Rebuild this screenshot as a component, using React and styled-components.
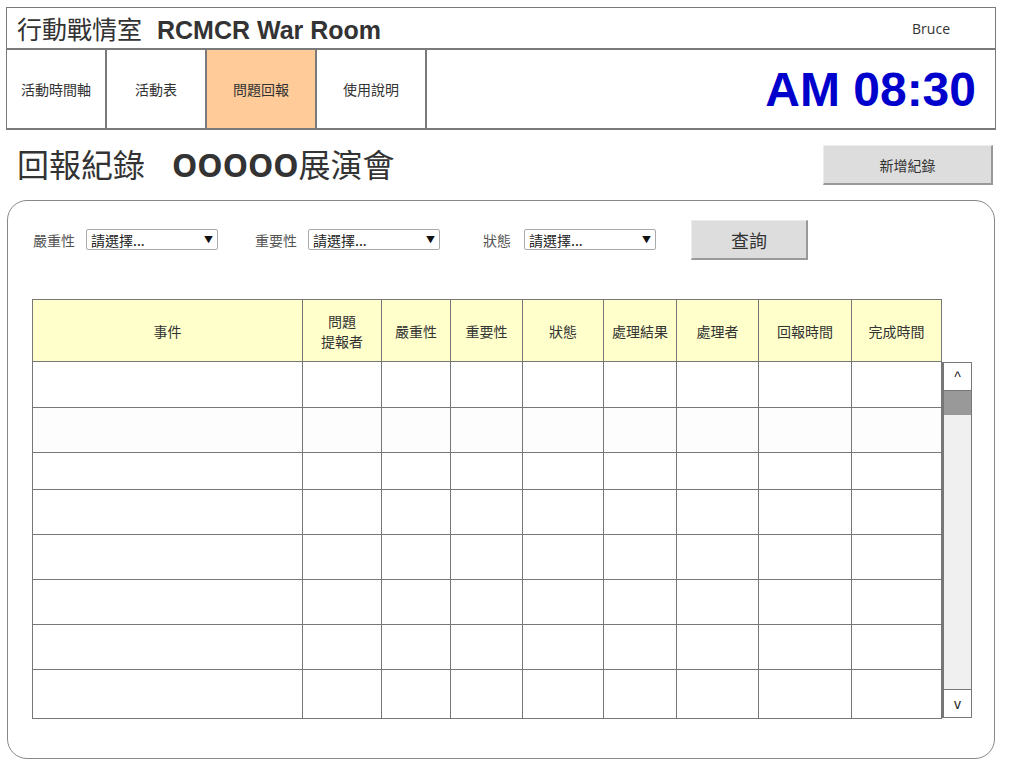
import React from 'react';
import styled, { createGlobalStyle } from 'styled-components';

const cjk = '"Noto Sans CJK TC", "Noto Sans", sans-serif';
const latin = '"Liberation Sans", "Noto Sans CJK TC", Arial, sans-serif';

const GlobalStyle = createGlobalStyle`
  body {
    margin: 0;
    background: #fff;
    font-family: ${cjk};
    color: #333;
  }
`;

const navItems = [
  { label: '活動時間軸', width: 100 },
  { label: '活動表', width: 100 },
  { label: '問題回報', width: 110, active: true },
  { label: '使用說明', width: 110 },
];

const columns = [
  { label: '事件', width: 270 },
  { label: '問題\n提報者', width: 79 },
  { label: '嚴重性', width: 69 },
  { label: '重要性', width: 72 },
  { label: '狀態', width: 81 },
  { label: '處理結果', width: 73 },
  { label: '處理者', width: 82 },
  { label: '回報時間', width: 93 },
  { label: '完成時間', width: 90 },
];

const rowHeights = [46, 45, 37, 45, 45, 45, 45, 49];

const filters = [
  { label: '嚴重性', labelGap: 11, gap: 37 },
  { label: '重要性', labelGap: 11, gap: 43 },
  { label: '狀態', labelGap: 13, gap: 0 },
];

export default function App() {
  return (
    <PageStyled>
      <GlobalStyle />
      <HeaderStyled>
        <TitleBarStyled>
          <SiteTitleStyled>
            行動戰情室<strong>RCMCR War Room</strong>
          </SiteTitleStyled>
          <UserStyled>Bruce</UserStyled>
        </TitleBarStyled>
        <NavRowStyled>
          {navItems.map((item) => (
            <NavTabStyled key={item.label} $width={item.width} $active={item.active}>
              {item.label}
            </NavTabStyled>
          ))}
          <ClockStyled>AM 08:30</ClockStyled>
        </NavRowStyled>
      </HeaderStyled>

      <PageHeadStyled>
        <PageTitleStyled>
          回報紀錄<strong>OOOOO</strong>展演會
        </PageTitleStyled>
        <AddButtonStyled>新增紀錄</AddButtonStyled>
      </PageHeadStyled>

      <PanelStyled>
        <FilterRowStyled>
          {filters.map((f) => (
            <FilterStyled key={f.label} $gap={f.gap}>
              <FilterLabelStyled $gap={f.labelGap}>{f.label}</FilterLabelStyled>
              <FakeSelectStyled>
                請選擇...
                <ArrowStyled>▼</ArrowStyled>
              </FakeSelectStyled>
            </FilterStyled>
          ))}
          <SearchButtonStyled>查詢</SearchButtonStyled>
        </FilterRowStyled>

        <TableAreaStyled>
          <TableStyled>
            <colgroup>
              {columns.map((c) => (
                <col key={c.label} style={{ width: c.width }} />
              ))}
            </colgroup>
            <thead>
              <tr>
                {columns.map((c) => (
                  <HeadCellStyled key={c.label}>{c.label}</HeadCellStyled>
                ))}
              </tr>
            </thead>
            <tbody>
              {rowHeights.map((h, i) => (
                <BodyRowStyled key={i} $height={h} $shaded={i === 1}>
                  {columns.map((c) => (
                    <td key={c.label} />
                  ))}
                </BodyRowStyled>
              ))}
            </tbody>
          </TableStyled>
          <ScrollbarStyled>
            <ScrollButtonStyled>^</ScrollButtonStyled>
            <ScrollThumbStyled />
            <ScrollTrackStyled />
            <ScrollButtonStyled $down>v</ScrollButtonStyled>
          </ScrollbarStyled>
        </TableAreaStyled>
      </PanelStyled>
    </PageStyled>
  );
}

const PageStyled = styled.div`
  width: 990px;
  padding: 7px 0 0 6px;
`;

const HeaderStyled = styled.header`
  border: 2px solid #7a7a7a;
  border-top-width: 1px;
  border-left-width: 1px;
  border-right-width: 1px;
`;

const TitleBarStyled = styled.div`
  display: flex;
  align-items: center;
  justify-content: space-between;
  height: 40px;
  padding: 0 45px 0 10px;
  border-bottom: 2px solid #7a7a7a;
`;

const SiteTitleStyled = styled.h1`
  margin: 0;
  font-family: ${cjk};
  font-size: 25px;
  font-weight: 400;
  color: #333;

  & strong {
    margin-left: 15px;
    font-family: ${latin};
    font-size: 25px;
    font-weight: 700;
  }
`;

const UserStyled = styled.div`
  font-family: "Open Sans", sans-serif;
  font-size: 14px;
  color: #333;
`;

const NavRowStyled = styled.nav`
  display: flex;
  align-items: center;
  height: 78px;
`;

const NavTabStyled = styled.div`
  display: flex;
  align-items: center;
  justify-content: center;
  box-sizing: border-box;
  width: ${(p) => p.$width}px;
  height: 100%;
  border-right: 2px solid #7a7a7a;
  background-color: ${(p) => (p.$active ? '#ffcc99' : '#fff')};
  font-size: 14px;
  color: #333;
`;

const ClockStyled = styled.div`
  margin-left: auto;
  padding-right: 19px;
  font-family: ${latin};
  font-size: 48px;
  font-weight: 700;
  color: #0000cc;
`;

const PageHeadStyled = styled.div`
  display: flex;
  align-items: flex-start;
  justify-content: space-between;
  height: 70px;
  padding: 16px 3px 0 11px;
  box-sizing: border-box;
`;

const PageTitleStyled = styled.h2`
  margin: 0;
  font-family: ${cjk};
  font-size: 32px;
  font-weight: 400;
  line-height: 1.1;
  color: #333;

  & strong {
    margin-left: 27px;
    font-family: "Noto Sans", ${latin};
    font-weight: 700;
  }
`;

const ButtonBase = styled.div`
  display: flex;
  align-items: center;
  justify-content: center;
  box-sizing: border-box;
  background-color: #ddd;
  border-top: 1px solid #ececec;
  border-left: 1px solid #ececec;
  border-right: 2px solid #999;
  border-bottom: 2px solid #999;
  color: #333;
`;

const AddButtonStyled = styled(ButtonBase)`
  width: 170px;
  height: 40px;
  margin-top: -1px;
  font-size: 14px;
`;

const SearchButtonStyled = styled(ButtonBase)`
  width: 117px;
  height: 40px;
  margin-left: 35px;
  margin-top: -9px;
  font-size: 18px;
`;

const PanelStyled = styled.section`
  margin-left: 1px;
  width: 988px;
  height: 559px;
  box-sizing: border-box;
  border: 1px solid #888;
  border-radius: 20px;
  padding: 18px 0 0 24px;
`;

const FilterRowStyled = styled.div`
  display: flex;
  align-items: flex-start;
  height: 80px;
  padding: 10px 0 0 1px;
  box-sizing: border-box;
`;

const FilterStyled = styled.div`
  display: flex;
  align-items: center;
  margin-right: ${(p) => p.$gap}px;
`;

const FilterLabelStyled = styled.span`
  font-size: 14px;
  color: #555;
  margin-right: ${(p) => p.$gap}px;
`;

const FakeSelectStyled = styled.div`
  position: relative;
  width: 132px;
  height: 21px;
  box-sizing: border-box;
  border: 1px solid #aaa;
  border-radius: 2px;
  padding: 1px 0 0 4px;
  font-size: 14px;
  line-height: 19px;
  color: #222;
  background: #fff;
`;

const ArrowStyled = styled.span`
  position: absolute;
  right: 4px;
  top: 0;
  font-size: 9px;
  color: #111;
`;

const TableAreaStyled = styled.div`
  display: flex;
  align-items: flex-start;
`;

const TableStyled = styled.table`
  width: 909px;
  border-collapse: collapse;
  table-layout: fixed;

  & td {
    border: 1px solid #777;
    padding: 0;
  }
`;

const HeadCellStyled = styled.th`
  height: 61px;
  padding: 0;
  border: 1px solid #777;
  background-color: #ffffcc;
  font-size: 14px;
  font-weight: 400;
  color: #333;
  white-space: pre-line;
  line-height: 20px;
`;

const BodyRowStyled = styled.tr`
  height: ${(p) => p.$height}px;
  background-color: ${(p) => (p.$shaded ? '#fdfdfd' : '#fff')};
`;

const ScrollbarStyled = styled.div`
  display: flex;
  flex-direction: column;
  width: 30px;
  height: 356px;
  margin-top: 63px;
  box-sizing: border-box;
  border: 1px solid #777;
  border-left-width: 2px;
`;

const ScrollButtonStyled = styled.div`
  display: flex;
  align-items: center;
  justify-content: center;
  height: 27px;
  background: #fff;
  font-family: ${latin};
  font-size: 14px;
  color: #222;
  border-bottom: ${(p) => (p.$down ? 'none' : '1px solid #777')};
  border-top: ${(p) => (p.$down ? '1px solid #777' : 'none')};
`;

const ScrollThumbStyled = styled.div`
  height: 24px;
  background: #999;
`;

const ScrollTrackStyled = styled.div`
  flex: 1;
  background: #f0f0f0;
`;
